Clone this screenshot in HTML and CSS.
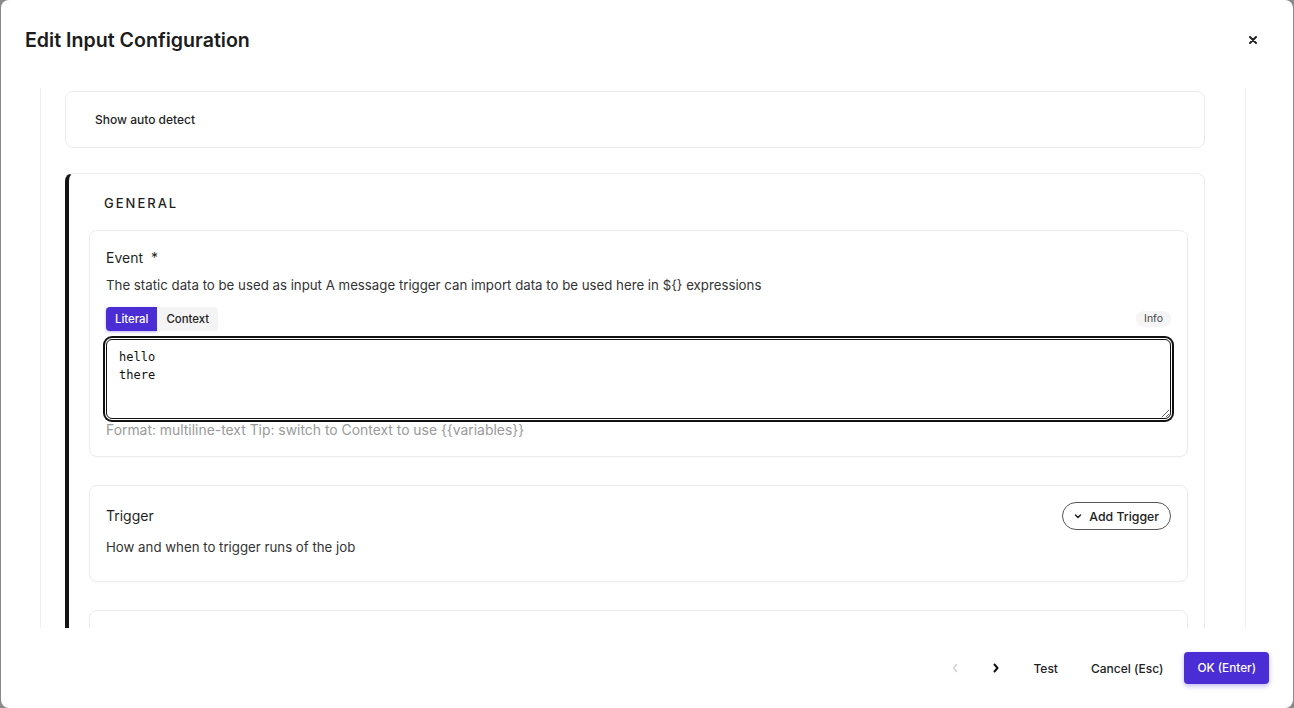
FILE: index.html
```html
<!DOCTYPE html>
<html lang="en">
<head>
<meta charset="utf-8">
<title>Edit Input Configuration</title>
<link rel="stylesheet" href="styles.css">
</head>
<body>
<div class="modal">
  <header class="modal-header">
    <h1 class="title">Edit Input Configuration</h1>
    <button class="close" aria-label="Close">
      <svg width="8" height="8" viewBox="0 0 8 8"><path d="M1 1L7 7M7 1L1 7" stroke="#222" stroke-width="2" stroke-linecap="round"/></svg>
    </button>
  </header>
  <div class="modal-body">
    <div class="panel">
      <div class="card-plain">Show auto detect</div>
      <section class="section">
        <div class="section-title">GENERAL</div>
        <div class="field-card">
          <div class="label">Event <span class="req">*</span></div>
          <div class="desc">The static data to be used as input A message trigger can import data to be used here in ${} expressions</div>
          <div class="toggle-row">
            <div class="toggle">
              <button class="tg tg-active">Literal</button>
              <button class="tg tg-off">Context</button>
            </div>
            <span class="info">Info</span>
          </div>
          <textarea class="ta">hello
there</textarea>
          <div class="hint">Format: multiline-text Tip: switch to Context to use {{variables}}</div>
        </div>
        <div class="field-card trigger-card">
          <div class="row">
            <div class="label">Trigger</div>
            <button class="pill-btn">
              <svg width="10" height="10" viewBox="0 0 10 10"><path d="M2.5 4L5 6.5L7.5 4" fill="none" stroke="#222" stroke-width="1.5" stroke-linecap="round" stroke-linejoin="round"/></svg>
              Add Trigger
            </button>
          </div>
          <div class="desc">How and when to trigger runs of the job</div>
        </div>
        <div class="field-card empty-card"></div>
      </section>
    </div>
  </div>
  <footer class="modal-footer">
    <button class="icon-btn" aria-label="Previous">
      <svg width="10" height="12" viewBox="0 0 10 12"><path d="M6.5 2.5L3.5 6L6.5 9.5" fill="none" stroke="#cfcfcf" stroke-width="1.4" stroke-linecap="round" stroke-linejoin="round"/></svg>
    </button>
    <button class="icon-btn" aria-label="Next">
      <svg width="10" height="12" viewBox="0 0 10 12"><path d="M3.5 2.5L6.5 6L3.5 9.5" fill="none" stroke="#111" stroke-width="2" stroke-linecap="round" stroke-linejoin="round"/></svg>
    </button>
    <button class="text-btn">Test</button>
    <button class="text-btn">Cancel (Esc)</button>
    <button class="primary-btn">OK (Enter)</button>
  </footer>
</div>
</body>
</html>
```
FILE: styles.css
```css
* { box-sizing: border-box; }
html, body { margin: 0; height: 708px; overflow: hidden; }
body {
  background: #8a8a8a;
  font-family: Inter, "Noto Sans", sans-serif;
  color: #222;
}
button { font-family: inherit; cursor: pointer; }

.modal {
  margin-left: 1px;
  width: 1292px;
  height: 708px;
  background: #fff;
  border-radius: 8px;
  display: flex;
  flex-direction: column;
  overflow: hidden;
}

.modal-header {
  flex: none;
  height: 88px;
  display: flex;
  align-items: flex-start;
  justify-content: space-between;
  padding: 24px 24px 0 24px;
}
.title {
  margin: 0;
  font-size: 19.6px;
  font-weight: 600;
  line-height: 32px;
  color: #1c1c1c;
}
.close {
  width: 32px;
  height: 32px;
  border: 0;
  background: none;
  display: flex;
  align-items: center;
  justify-content: center;
  padding: 0;
}

.modal-body {
  flex: 1;
  overflow: hidden;
  padding: 0 47px 0 39px;
}
.panel {
  height: 100%;
  border-left: 1px solid #efefef;
  border-right: 1px solid #efefef;
  padding: 3px 40px 0 24px;
}

.card-plain {
  height: 57px;
  border: 1px solid #ececec;
  border-radius: 8px;
  display: flex;
  align-items: center;
  padding: 0 29px;
  font-size: 12px;
  font-weight: 500;
  color: #1f1f1f;
  margin-bottom: 25px;
}

.section {
  border: 1px solid #ededed;
  border-left: 4px solid #141414;
  border-radius: 8px;
  padding: 19px 16px 0 20px;
}
.section-title {
  font-size: 13px;
  font-weight: 500;
  letter-spacing: 2px;
  line-height: 20px;
  padding-left: 15px;
  margin-bottom: 17px;
  color: #1f1f1f;
}

.field-card {
  border: 1px solid #ececec;
  border-radius: 8px;
  padding: 16px 16px 15px 16px;
  margin-bottom: 28px;
  box-shadow: 0 1px 2px rgba(0, 0, 0, 0.03);
}
.label {
  font-size: 14px;
  line-height: 22px;
  color: #1f1f1f;
}
.req { margin-left: 4px; }
.desc {
  margin-top: 6px;
  font-size: 13.25px;
  line-height: 20px;
  color: #333;
}

.toggle-row {
  margin-top: 12px;
  display: flex;
  align-items: center;
  justify-content: space-between;
}
.toggle { display: flex; }
.tg {
  height: 24px;
  border: 0;
  font-size: 11.4px;
  font-weight: 500;
  padding: 0 9px;
}
.tg-active {
  background: #4a2dd4;
  color: #fff;
  border-radius: 4px 0 0 4px;
  box-shadow: 0 1px 3px rgba(74, 45, 212, 0.35);
}
.tg-off {
  background: #f4f4f4;
  color: #222;
  border-radius: 0 4px 4px 0;
}
.info {
  font-size: 10.5px;
  line-height: 16px;
  padding: 0 8px;
  border-radius: 8px;
  background: #f5f5f5;
  color: #444;
}

.ta {
  display: block;
  width: 100%;
  height: 80px;
  margin-top: 8px;
  border: 1px solid #111;
  border-radius: 6px;
  box-shadow: 0 0 0 1px #fff, 0 0 0 3px #111;
  outline: none;
  padding: 8px 12px 7px;
  font-family: "DejaVu Sans Mono", "Liberation Mono", monospace;
  font-size: 12px;
  line-height: 18px;
  color: #111;
  resize: vertical;
}
.hint {
  margin-top: 1px;
  font-size: 13.9px;
  line-height: 21px;
  color: #9a9a9a;
}

.trigger-card { padding-bottom: 24px; padding-top: 15px; }
.row {
  height: 30px;
  display: flex;
  align-items: center;
  justify-content: space-between;
}
.trigger-card .desc { margin-top: 6px; }
.pill-btn {
  height: 28px;
  border: 1px solid #555;
  border-radius: 14px;
  background: #fff;
  display: flex;
  align-items: center;
  gap: 6px;
  padding: 0 11px 0 10px;
  font-size: 12.3px;
  font-weight: 500;
  color: #222;
}
.empty-card { height: 80px; margin-top: 1px; }

.modal-footer {
  flex: none;
  height: 80px;
  display: flex;
  align-items: center;
  justify-content: flex-end;
  gap: 9px;
  padding-right: 24px;
}
.icon-btn {
  width: 32px;
  height: 32px;
  border: 0;
  background: none;
  display: flex;
  align-items: center;
  justify-content: center;
  padding: 0;
}
.text-btn {
  height: 32px;
  border: 0;
  background: none;
  padding: 0 12px;
  font-size: 12px;
  font-weight: 500;
  color: #222;
}
.primary-btn {
  height: 32px;
  border: 0;
  border-radius: 4px;
  background: #4a2dd4;
  color: #fff;
  padding: 0 13px;
  font-size: 11.8px;
  font-weight: 500;
  box-shadow: 0 2px 5px rgba(74, 45, 212, 0.35);
}
```
